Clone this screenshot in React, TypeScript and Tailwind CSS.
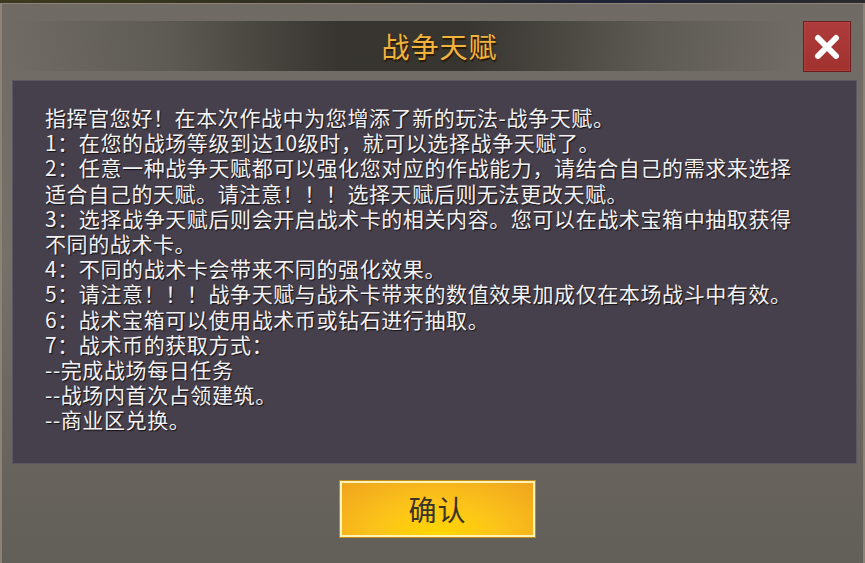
import React from 'react'

const lines = [
  '指挥官您好！在本次作战中为您增添了新的玩法-战争天赋。',
  '1：在您的战场等级到达10级时，就可以选择战争天赋了。',
  '2：任意一种战争天赋都可以强化您对应的作战能力，请结合自己的需求来选择',
  '适合自己的天赋。请注意！！！选择天赋后则无法更改天赋。',
  '3：选择战争天赋后则会开启战术卡的相关内容。您可以在战术宝箱中抽取获得',
  '不同的战术卡。',
  '4：不同的战术卡会带来不同的强化效果。',
  '5：请注意！！！战争天赋与战术卡带来的数值效果加成仅在本场战斗中有效。',
  '6：战术宝箱可以使用战术币或钻石进行抽取。',
  '7：战术币的获取方式：',
  '--完成战场每日任务',
  '--战场内首次占领建筑。',
  '--商业区兑换。',
]

const App = () => {
  return (
    <div className="w-[865px] h-[563px] overflow-hidden flex flex-col font-['Noto_Sans_CJK_SC','Noto_Sans',sans-serif]">
      <div className="h-[3px] bg-[linear-gradient(90deg,#3b3a1e,#2e2d22_40%,#1e2236_70%,#2a2a2c)]" />
      <div className="flex-1 flex flex-col border-l-2 border-r-2 border-t border-[#8c8275] bg-[linear-gradient(180deg,#6f6b64,#757068_45%,#625e58)]">
        {/* title */}
        <div className="relative mt-[17px] h-[50px] flex items-center justify-center">
          <div className="absolute inset-y-0 left-[10px] right-[70px] bg-[linear-gradient(90deg,rgba(60,57,52,0)_0%,rgba(60,57,52,0.35)_20%,rgba(52,50,45,0.95)_42%,rgba(52,50,45,0.95)_58%,rgba(60,57,52,0.35)_82%,rgba(60,57,52,0)_100%)]" />
          <h1 className="relative ml-[14px] text-[28px] leading-none text-[#f2b33d] tracking-[1px] [text-shadow:1px_2px_1px_#2a1a08]">
            战争天赋
          </h1>
          <button className="absolute right-[12px] top-0 w-[48px] h-[51px] flex items-center justify-center border border-[#6e1e1e] bg-[linear-gradient(180deg,#ad3b3b,#a1322f)] shadow-[inset_0_0_2px_#c85a55]">
            <svg width="28" height="28" viewBox="0 0 28 28">
              <path d="M5 5 L23 23 M23 5 L5 23" stroke="#fff" strokeWidth="6" strokeLinecap="round" />
            </svg>
          </button>
        </div>

        {/* content */}
        <div className="mt-[9px] ml-[10px] mr-[6px] h-[384px] border border-[#5c5563] bg-[#463f4c] pl-[32px] pt-[24px]">
          {lines.map((line, i) => (
            <p
              key={i}
              className="text-[21px] leading-[25.2px] tracking-[0.6px] text-[#f3f1f3] whitespace-nowrap [text-shadow:1px_1px_1px_#111]"
            >
              {line}
            </p>
          ))}
        </div>

        {/* confirm */}
        <div className="mt-[16px] flex justify-center pl-[10px]">
          <button className="w-[197px] h-[58px] border border-[#c48a12] p-[2px] bg-[#fff4b8]">
            <div className="w-full h-full flex items-center justify-center bg-[radial-gradient(ellipse_at_50%_100%,#ffd600_0%,#fcc41a_45%,#efa41e_100%)]">
              <span className="text-[28px] leading-none text-[#3b3326] tracking-[1px]">确认</span>
            </div>
          </button>
        </div>
      </div>
    </div>
  )
}

export default App
